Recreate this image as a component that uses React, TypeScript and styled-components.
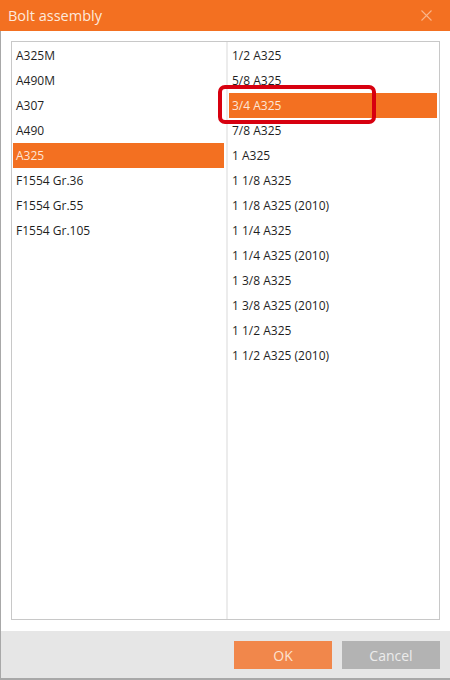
import React from 'react'
import styled, { createGlobalStyle } from 'styled-components'

const ORANGE = '#f37021'

const GlobalStyle = createGlobalStyle`
  html, body {
    margin: 0;
    padding: 0;
    background: #ffffff;
  }
  body {
    font-family: 'Open Sans', 'Noto Sans', sans-serif;
  }
`

const Window = styled.div`
  width: 450px;
  height: 680px;
  box-sizing: border-box;
  display: flex;
  flex-direction: column;
  border-left: 1px solid #a8a8a8;
  border-bottom: 2px solid #a8a8a8;
  background: #ffffff;
`

const TitleBar = styled.div`
  height: 31px;
  flex: none;
  margin-left: -1px;
  display: flex;
  align-items: center;
  justify-content: space-between;
  padding: 0 16px 0 8px;
  background: ${ORANGE};
  color: #fde9dc;
  font-size: 14.5px;
`

const CloseButton = styled.button`
  width: 16px;
  height: 16px;
  padding: 0;
  border: none;
  background: none;
  display: flex;
  align-items: center;
  justify-content: center;
`

const Body = styled.div`
  flex: 1;
  padding: 10px 10px 11px 10px;
  display: flex;
  min-height: 0;
`

const ListBox = styled.div`
  flex: 1;
  display: grid;
  grid-template-columns: 216px 1fr;
  border: 1px solid #c8c8c8;
`

const Column = styled.div<{ $divider?: boolean }>`
  padding: 1px 2px 1px 1px;
  display: flex;
  flex-direction: column;
  border-right: ${(p) => (p.$divider ? '2px solid #ececec' : 'none')};
`

const Row = styled.div<{ $selected?: boolean }>`
  position: relative;
  height: 25px;
  flex: none;
  display: flex;
  align-items: center;
  padding-left: 3px;
  font-size: 12px;
  color: ${(p) => (p.$selected ? '#fde6d6' : '#1f1f1f')};
  background: ${(p) => (p.$selected ? ORANGE : 'transparent')};
`

const Callout = styled.span`
  position: absolute;
  left: -11px;
  top: -8px;
  width: 158px;
  height: 39px;
  box-sizing: border-box;
  border: 4px solid #d7000f;
  border-radius: 7px;
  pointer-events: none;
`

const Footer = styled.div`
  height: 47px;
  flex: none;
  display: flex;
  justify-content: flex-end;
  align-items: flex-start;
  gap: 10px;
  padding: 10px 10px 0 0;
  box-sizing: border-box;
  background: #e6e6e6;
`

const Button = styled.button<{ $primary?: boolean }>`
  width: 98px;
  height: 28px;
  border: none;
  font-family: inherit;
  font-size: 14px;
  color: ${(p) => (p.$primary ? '#fde3d2' : '#ececec')};
  background: ${(p) => (p.$primary ? '#f1874b' : '#b3b3b3')};
`

const grades = ['A325M', 'A490M', 'A307', 'A490', 'A325', 'F1554 Gr.36', 'F1554 Gr.55', 'F1554 Gr.105']

const sizes = [
  '1/2 A325',
  '5/8 A325',
  '3/4 A325',
  '7/8 A325',
  '1 A325',
  '1 1/8 A325',
  '1 1/8 A325 (2010)',
  '1 1/4 A325',
  '1 1/4 A325 (2010)',
  '1 3/8 A325',
  '1 3/8 A325 (2010)',
  '1 1/2 A325',
  '1 1/2 A325 (2010)',
]

export default function App() {
  const grade = 'A325'
  const size = '3/4 A325'

  return (
    <Window>
      <GlobalStyle />
      <TitleBar>
        <span>Bolt assembly</span>
        <CloseButton aria-label="Close">
          <svg width="11" height="11" viewBox="0 0 11 11">
            <path d="M0.5 0.5 L10.5 10.5 M10.5 0.5 L0.5 10.5" stroke="#f9b58a" strokeWidth="1.1" />
          </svg>
        </CloseButton>
      </TitleBar>

      <Body>
        <ListBox>
          <Column $divider>
            {grades.map((g) => (
              <Row key={g} $selected={g === grade}>
                {g}
              </Row>
            ))}
          </Column>
          <Column>
            {sizes.map((s) => (
              <Row key={s} $selected={s === size}>
                {s}
                {s === size && <Callout />}
              </Row>
            ))}
          </Column>
        </ListBox>
      </Body>

      <Footer>
        <Button $primary>OK</Button>
        <Button>Cancel</Button>
      </Footer>
    </Window>
  )
}
